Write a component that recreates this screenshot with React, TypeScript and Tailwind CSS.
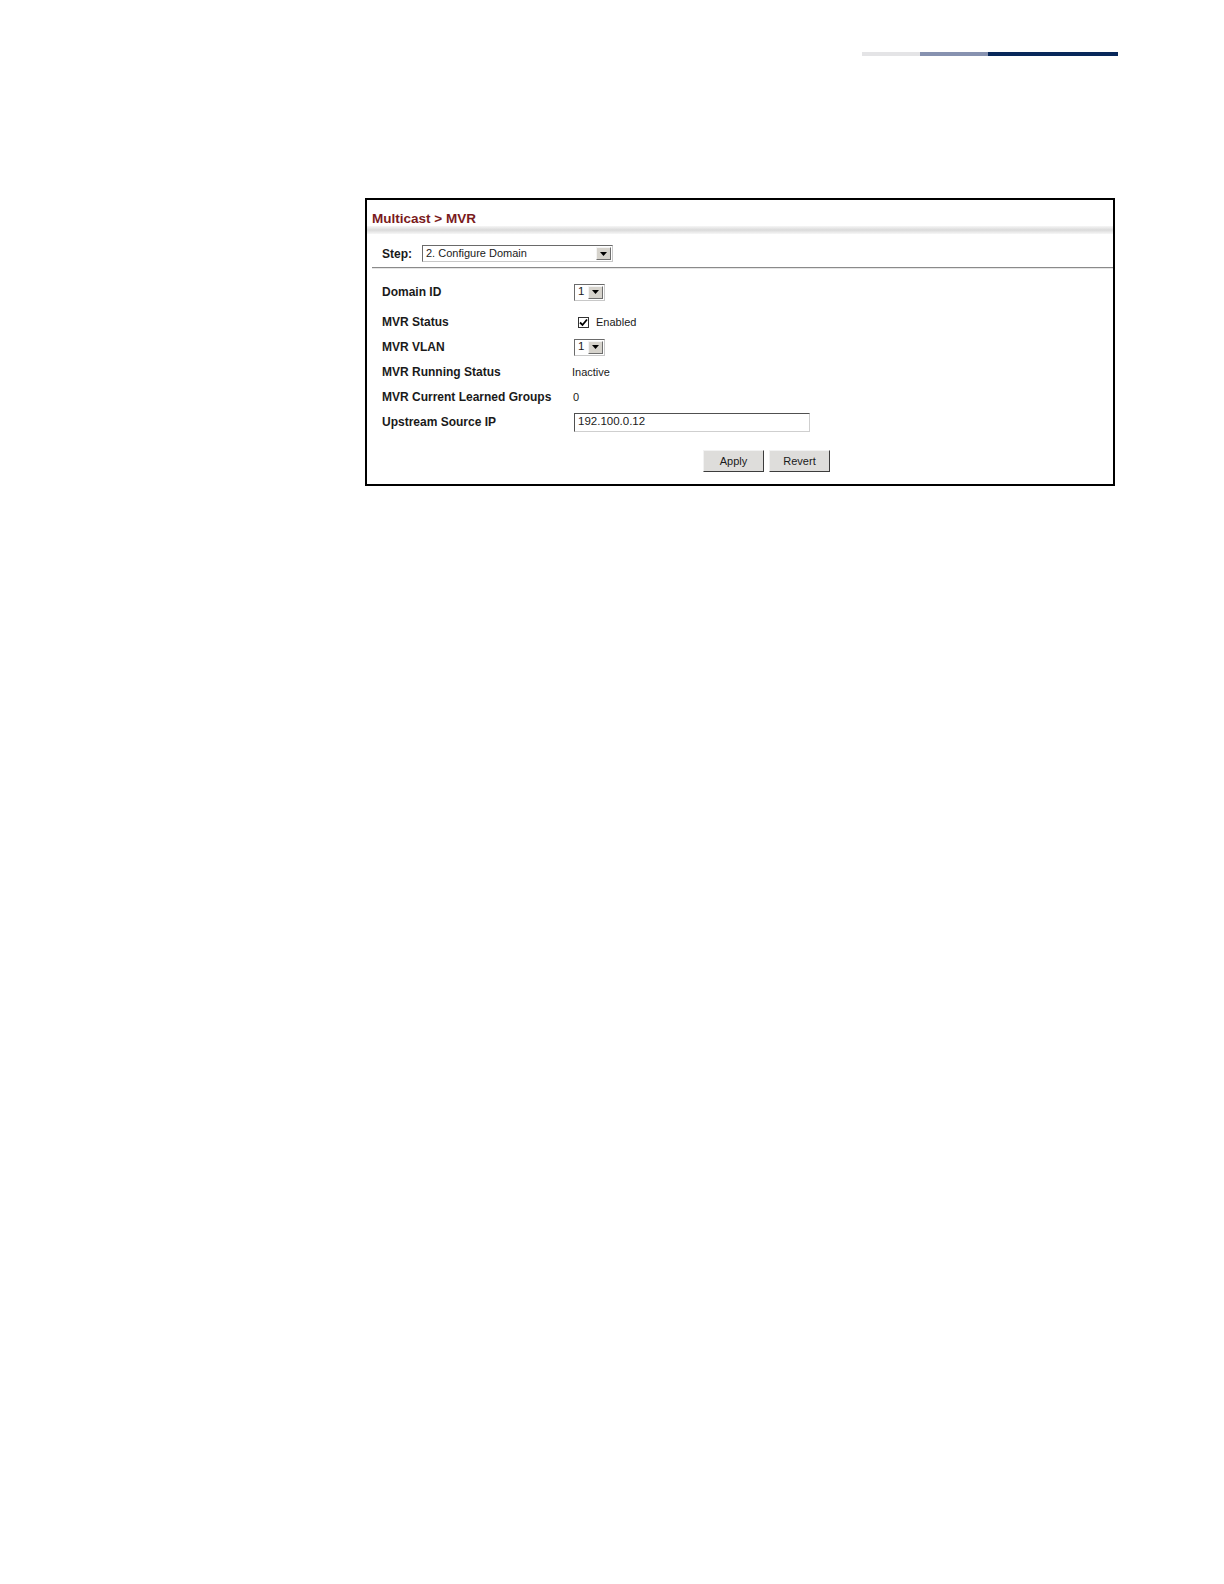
import React from "react";

function Arrow() {
  return (
    <svg width="7" height="4" viewBox="0 0 7 4" className="block">
      <path d="M0 0 H7 L3.5 4 Z" fill="#000" />
    </svg>
  );
}

function DropBtn() {
  return (
    <div className="flex h-full w-[15px] items-center justify-center border-t border-l border-t-[#f4f4f4] border-l-[#f4f4f4] border-r border-b border-r-[#6e6e6e] border-b-[#6e6e6e] bg-[#d6d3cc]">
      <Arrow />
    </div>
  );
}

function SmallSelect({ value }: { value: string }) {
  return (
    <div className="flex h-[17px] w-[31px] items-stretch border border-t-[#6a6a6a] border-l-[#6a6a6a] border-r-[#c8c8c8] border-b-[#c8c8c8] bg-white">
      <div className="flex flex-1 items-center pl-[3px] text-[11.5px] leading-none text-[#1a1a1a]">{value}</div>
      <div className="p-[1px]">
        <DropBtn />
      </div>
    </div>
  );
}

function Label({ children }: { children: React.ReactNode }) {
  return (
    <div className="w-[192px] text-[12px] font-bold leading-[14px] text-[#1a1a1a]">{children}</div>
  );
}

export default function App() {
  return (
    <div
      className="h-[1584px] w-[1224px] bg-white"
      style={{ fontFamily: '"Liberation Sans", Arial, sans-serif' }}
    >
      {/* top bar */}
      <div className="flex pl-[862px] pt-[52px]">
        <div className="h-[4px] w-[58px] bg-[#e4e4e6]" />
        <div className="h-[4px] w-[68px] bg-[#8792b0]" />
        <div className="h-[4px] w-[130px] bg-[#08285a]" />
      </div>

      {/* frame */}
      <div className="ml-[365px] mt-[142px] h-[288px] w-[750px] border-2 border-black bg-white">
        {/* title */}
        <div className="h-[26px] pl-[5px] pt-[12px]">
          <div className="text-[13.5px] font-bold leading-[14px] text-[#7a1a1c]">Multicast &gt; MVR</div>
        </div>
        <div className="h-[8px] bg-gradient-to-b from-[#f6f6f6] via-[#dadada] to-[#f7f7f7]" />

        {/* step row */}
        <div className="flex items-center pl-[15px] pt-[11px]">
          <div className="w-[40px] text-[12px] font-bold leading-[14px] text-[#1a1a1a]">Step:</div>
          <div className="flex h-[17px] w-[191px] items-stretch border border-t-[#6a6a6a] border-l-[#6a6a6a] border-r-[#c8c8c8] border-b-[#c8c8c8] bg-white">
            <div className="flex flex-1 items-center pl-[3px] text-[11px] leading-none text-[#1a1a1a]">2. Configure Domain</div>
            <div className="p-[1px]">
              <DropBtn />
            </div>
          </div>
        </div>
        <div className="ml-[5px] mt-[5px] h-[2px] border-t border-t-[#8a8a8a] border-b border-b-[#e6e6e6]" />

        {/* form rows */}
        <div className="pl-[15px]">
          <div className="mt-[13px] flex h-[20px] items-center">
            <Label>Domain ID</Label>
            <SmallSelect value="1" />
          </div>
          <div className="mt-[10px] flex h-[20px] items-center">
            <Label>MVR Status</Label>
            <div className="ml-[4px] flex items-center">
              <div className="flex h-[11px] w-[11px] items-center justify-center border border-[#333] bg-white">
                <svg width="9" height="9" viewBox="0 0 9 9" className="block">
                  <path d="M1 4.5 L3.5 7 L8 1.5" stroke="#000" strokeWidth="1.8" fill="none" />
                </svg>
              </div>
              <div className="ml-[7px] text-[11px] leading-[13px] text-[#1a1a1a]">Enabled</div>
            </div>
          </div>
          <div className="mt-[5px] flex h-[20px] items-center">
            <Label>MVR VLAN</Label>
            <SmallSelect value="1" />
          </div>
          <div className="mt-[5px] flex h-[20px] items-center">
            <Label>MVR Running Status</Label>
            <div className="-ml-[2px] text-[11px] leading-[13px] text-[#1a1a1a]">Inactive</div>
          </div>
          <div className="mt-[5px] flex h-[20px] items-center">
            <Label>MVR Current Learned Groups</Label>
            <div className="-ml-[1px] text-[11px] leading-[13px] text-[#1a1a1a]">0</div>
          </div>
          <div className="mt-[5px] flex h-[20px] items-center">
            <Label>Upstream Source IP</Label>
            <div className="flex h-[19px] w-[236px] items-center border border-t-[#505050] border-l-[#505050] border-r-[#cfcfcf] border-b-[#cfcfcf] bg-white pl-[3px] text-[11.5px] leading-none text-[#1a1a1a]">
              192.100.0.12
            </div>
          </div>
        </div>

        {/* buttons */}
        <div className="mt-[18px] flex gap-[5px] pl-[336px]">
          <div className="flex h-[22px] w-[61px] items-center justify-center border border-t-[#f2f2f2] border-l-[#f2f2f2] border-r-[#3c3c3c] border-b-[#3c3c3c] bg-[#dedddb] text-[11px] leading-none text-[#1a1a1a]">
            Apply
          </div>
          <div className="flex h-[22px] w-[61px] items-center justify-center border border-t-[#f2f2f2] border-l-[#f2f2f2] border-r-[#3c3c3c] border-b-[#3c3c3c] bg-[#dedddb] text-[11px] leading-none text-[#1a1a1a]">
            Revert
          </div>
        </div>
      </div>
    </div>
  );
}
